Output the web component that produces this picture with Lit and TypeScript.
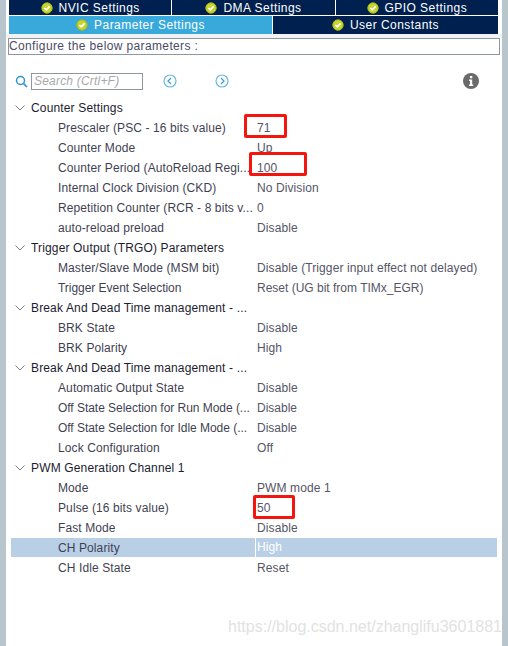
import { LitElement, html, css } from "lit";
import { customElement } from "lit/decorators.js";

const check = html`<svg class="chk" viewBox="0 0 12 12" width="12" height="12"><circle cx="6" cy="6" r="5.2" fill="#c6d530" stroke="#a9b81a" stroke-width="1"/><path d="M3.4 6 L5.3 7.9 L8.6 4.4" fill="none" stroke="#fff" stroke-width="1.6"/></svg>`;

type Row = { l?: string; v?: string; h?: string; sel?: boolean; tight?: boolean };
const rows: Row[] = [
  { h: "Counter Settings" },
  { l: "Prescaler (PSC - 16 bits value)", v: "71" },
  { l: "Counter Mode", v: "Up" },
  { l: "Counter Period (AutoReload Regi...", v: "100" },
  { l: "Internal Clock Division (CKD)", v: "No Division" },
  { l: "Repetition Counter (RCR - 8 bits v...", v: "0" },
  { l: "auto-reload preload", v: "Disable" },
  { h: "Trigger Output (TRGO) Parameters" },
  { l: "Master/Slave Mode (MSM bit)", v: "Disable (Trigger input effect not delayed)" },
  { l: "Trigger Event Selection", v: "Reset (UG bit from TIMx_EGR)", tight: true },
  { h: "Break And Dead Time management - ..." },
  { l: "BRK State", v: "Disable" },
  { l: "BRK Polarity", v: "High" },
  { h: "Break And Dead Time management - ..." },
  { l: "Automatic Output State", v: "Disable" },
  { l: "Off State Selection for Run Mode (...", v: "Disable", tight: true },
  { l: "Off State Selection for Idle Mode (...", v: "Disable", tight: true },
  { l: "Lock Configuration", v: "Off" },
  { h: "PWM Generation Channel 1" },
  { l: "Mode", v: "PWM mode 1" },
  { l: "Pulse (16 bits value)", v: "50" },
  { l: "Fast Mode", v: "Disable" },
  { l: "CH Polarity", v: "High", sel: true },
  { l: "CH Idle State", v: "Reset" },
];

const chevron = html`<svg class="chev" width="10" height="6" viewBox="0 0 10 6"><path d="M0.5 0.5 L5 5 L9.5 0.5" fill="none" stroke="#7a7a7a" stroke-width="1"/></svg>`;

const nav = (d: string) => html`<svg width="14" height="14" viewBox="0 0 14 14"><circle cx="7" cy="7" r="6" fill="none" stroke="#6cb9e6" stroke-width="1.2"/><path d="${d}" fill="none" stroke="#3a9bd6" stroke-width="1.2"/></svg>`;

@customElement("app-root")
export class AppRoot extends LitElement {
  static styles = css`
    :host {
      display: block;
      position: relative;
      width: 508px;
      height: 646px;
      overflow: hidden;
      background: #fff;
      font-family: "Liberation Sans", Arial, sans-serif;
      font-size: 12px;
      color: #3f3f52;
    }
    .frame { display: grid; grid-template-columns: 6px 1fr 6px; height: 646px; }
    .rail { background: #b9c5cc; }
    .main { display: flex; flex-direction: column; min-width: 0; }
    .tabs { margin: 0 4px 0 3px; display: flex; flex-direction: column; gap: 1px; }
    .tabrow { display: flex; gap: 1px; }
    .tab {
      display: flex; align-items: center; justify-content: center; gap: 6px;
      background: #00204f; color: #fff; letter-spacing: 0.45px;
    }
    .r1 .tab { height: 15px; flex: 1 1 0; }
    .r2 .tab { height: 18px; }
    .tab.on { background: #39a9dc; width: 263px; }
    .tab.off { flex: 1; }
    .chk { flex: none; }
    .band { height: 4px; background: #f0f3f5; }
    .conf {
      margin: 0 2px 0 2px; height: 17px; box-sizing: border-box;
      border: 1px solid #8e979c; line-height: 15px;
      color: #4a4a66; letter-spacing: 0.37px; white-space: nowrap;
    }
    .tools {
      display: flex; align-items: center; height: 18px; margin-top: 17px; padding-left: 9px;
    }
    .search {
      width: 112px; height: 17px; box-sizing: border-box; border: 1px solid #8e979c;
      margin-left: 3px; padding-left: 2px; line-height: 15px; font-style: italic; color: #a8a8a8; letter-spacing: 0.2px;
    }
    .prev { margin-left: 20px; display: flex; }
    .next { margin-left: 38px; display: flex; }
    .info { margin-left: auto; margin-right: 23px; display: flex; }
    .list { margin-top: 8px; margin-left: 5px; margin-right: 5px; letter-spacing: 0.1px; }
    .row { display: grid; grid-template-columns: 244px 1fr; height: 20px; align-items: center; white-space: nowrap; }
    .row .l { padding-left: 47px; overflow: hidden; }
    .row .v { padding-left: 2px; color: #555566; }
    .row.tight .l { letter-spacing: -0.04px; }
    .row.tight .v { letter-spacing: 0; }
    .row.sel { height: 19px; margin-bottom: 1px; background: #b8cfe6; }
    .row.sel .v { color: #fff; border-left: 1px solid #fff; height: 19px; line-height: 19px; padding-left: 1px; }
    .hd { display: flex; align-items: center; height: 20px; color: #1c1c30; white-space: nowrap; letter-spacing: 0.15px; }
    .chev { margin-left: 4px; margin-right: 6px; flex: none; }
    .mark { position: absolute; border: 3px solid #f5150f; border-radius: 2px; box-sizing: border-box; }
    .m1 { left: 244px; top: 114px; width: 43px; height: 24px; }
    .m2 { left: 249px; top: 152px; width: 58px; height: 24px; }
    .m3 { left: 253px; top: 495px; width: 42px; height: 24px; }
    .wm { position: absolute; left: 228px; top: 618px; font-size: 16px; color: #e2e2e2; white-space: nowrap; }
  `;

  render() {
    return html`
      <div class="frame">
        <div class="rail"></div>
        <div class="main">
          <div class="tabs">
            <div class="tabrow r1">
              <div class="tab">${check}NVIC Settings</div>
              <div class="tab">${check}DMA Settings</div>
              <div class="tab">${check}GPIO Settings</div>
            </div>
            <div class="tabrow r2">
              <div class="tab on">${check}Parameter Settings</div>
              <div class="tab off">${check}User Constants</div>
            </div>
          </div>
          <div class="band"></div>
          <div class="conf">Configure the below parameters :</div>
          <div class="tools">
            <svg width="13" height="13" viewBox="0 0 13 13"><circle cx="5.5" cy="5.5" r="4" fill="none" stroke="#2f93d1" stroke-width="1.5"/><path d="M8.5 8.5 L12 12" stroke="#2f93d1" stroke-width="1.7"/></svg>
            <div class="search">Search (Crtl+F)</div>
            <div class="prev">${nav("M8 4 L5 7 L8 10")}</div>
            <div class="next">${nav("M6 4 L9 7 L6 10")}</div>
            <div class="info">
              <svg width="16" height="16" viewBox="0 0 16 16"><circle cx="8" cy="8" r="8" fill="#6a6a6a"/><rect x="6.9" y="3" width="2.4" height="2.2" fill="#fff"/><path d="M6 6.6 H9.2 V11.6 H10.2 V13 H6 V11.6 H7 V8 H6 Z" fill="#fff"/></svg>
            </div>
          </div>
          <div class="list">
            ${rows.map((r) =>
              r.h
                ? html`<div class="hd">${chevron}${r.h}</div>`
                : html`<div class="row ${r.sel ? "sel" : ""} ${r.tight ? "tight" : ""}"><div class="l">${r.l}</div><div class="v">${r.v}</div></div>`
            )}
          </div>
        </div>
        <div class="rail"></div>
      </div>
      <div class="mark m1"></div>
      <div class="mark m2"></div>
      <div class="mark m3"></div>
      <div class="wm">https://blog.csdn.net/zhanglifu3601881</div>
    `;
  }
}
